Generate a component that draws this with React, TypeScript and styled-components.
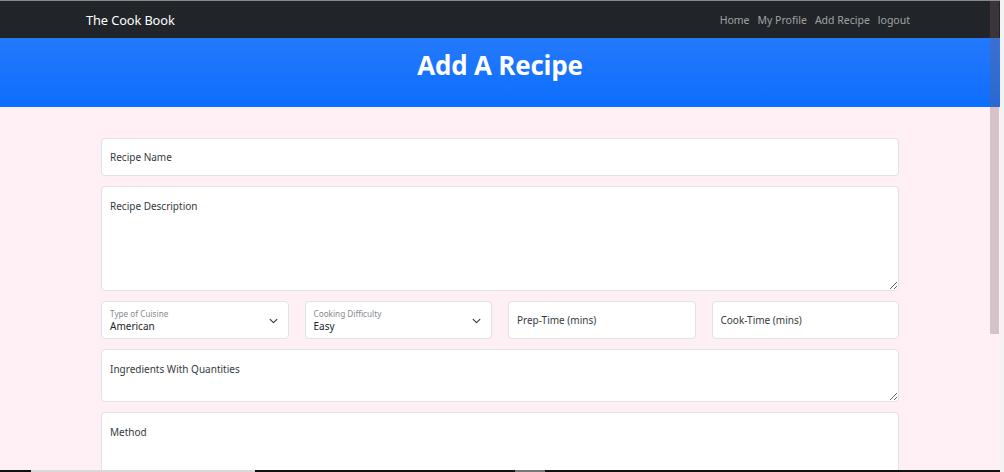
import React from "react";
import styled, { createGlobalStyle } from "styled-components";

const Global = createGlobalStyle`
  html, body { margin: 0; padding: 0; }
  body {
    background: #f3f3f3;
    font-family: "Noto Sans", "Open Sans", sans-serif;
    overflow: hidden;
  }
  * { box-sizing: border-box; }
`;

const Page = styled.div`
  position: relative;
  width: 1000px;
  height: 472px;
  background: #fff0f5;
  border-top: 1px solid #8a8a8a;
  overflow: hidden;
`;

const Navbar = styled.nav`
  height: 37px;
  background: #212529;
  display: flex;
  align-items: center;
  justify-content: space-between;
  padding: 0 90px 0 86px;
`;

const Brand = styled.a`
  color: #fff;
  font-size: 12.8px;
  text-decoration: none;
  letter-spacing: -0.1px;
`;

const NavLinks = styled.div`
  display: flex;
  gap: 8px;
`;

const NavLink = styled.a`
  color: rgba(255, 255, 255, 0.58);
  font-size: 10.5px;
  text-decoration: none;
`;

const Hero = styled.header`
  height: 69px;
  background: linear-gradient(180deg, #2479fb 0%, #0d6efd 100%);
  display: flex;
  align-items: center;
  justify-content: center;
  padding-bottom: 15px;
`;

const Title = styled.h1`
  margin: 0;
  color: #fff;
  font-family: "Open Sans", "Noto Sans", sans-serif;
  font-weight: 700;
  font-size: 26px;
  letter-spacing: -0.2px;
`;

const Form = styled.form`
  width: 798px;
  margin: 31px auto 0;
  display: flex;
  flex-direction: column;
  gap: 10px;
`;

const fieldBase = `
  width: 100%;
  background: #fff;
  border: 1px solid #dfe2e6;
  border-radius: 4px;
  font-family: "Noto Sans", "Open Sans", sans-serif;
  font-size: 10px;
  color: #212529;
  outline: none;
`;

const Input = styled.input`
  ${fieldBase}
  height: 38px;
  padding: 0 8px;
  &::placeholder { color: #343a40; opacity: 1; }
`;

const TextArea = styled.textarea<{ $h: number }>`
  ${fieldBase}
  height: ${(p) => p.$h}px;
  padding: 12px 8px;
  resize: vertical;
  line-height: 14px;
  &::placeholder { color: #343a40; opacity: 1; }
`;

const Row = styled.div`
  display: grid;
  grid-template-columns: repeat(4, 1fr);
  gap: 16px;
`;

const SelectBox = styled.div`
  ${fieldBase}
  height: 38px;
  position: relative;
  display: flex;
  flex-direction: column;
  justify-content: center;
  padding: 1px 8px 0;
`;

const SelectLabel = styled.span`
  font-size: 8.2px;
  color: #868b90;
  line-height: 12px;
`;

const SelectValue = styled.span`
  font-size: 10px;
  color: #212529;
  line-height: 13px;
`;

const Chevron = styled.svg`
  position: absolute;
  right: 10px;
  top: 16px;
`;

const Scrollbar = styled.div`
  position: absolute;
  top: 0;
  right: 1px;
  width: 9px;
  height: 333px;
  background: rgba(120, 90, 100, 0.3);
`;

const EdgeStrip = styled.div`
  position: absolute;
  left: 0;
  right: 0;
  bottom: 0;
  height: 2px;
  background: linear-gradient(90deg, #111 0 31px, #d8d8d8 31px 255px, #111 255px 515px, #777 515px 545px, #111 545px);
`;

const ChevronIcon = () => (
  <Chevron width="9" height="6" viewBox="0 0 16 10">
    <path d="M2 2l6 6 6-6" fill="none" stroke="#343a40" strokeWidth="2" strokeLinecap="round" strokeLinejoin="round" />
  </Chevron>
);

const Select = ({ label, value }: { label: string; value: string }) => (
  <SelectBox>
    <SelectLabel>{label}</SelectLabel>
    <SelectValue>{value}</SelectValue>
    <ChevronIcon />
  </SelectBox>
);

export default function App() {
  return (
    <>
      <Global />
      <Page>
        <Navbar>
          <Brand href="#">The Cook Book</Brand>
          <NavLinks>
            <NavLink href="#">Home</NavLink>
            <NavLink href="#">My Profile</NavLink>
            <NavLink href="#">Add Recipe</NavLink>
            <NavLink href="#">logout</NavLink>
          </NavLinks>
        </Navbar>
        <Hero>
          <Title>Add A Recipe</Title>
        </Hero>
        <Form>
          <Input placeholder="Recipe Name" />
          <TextArea $h={105} placeholder="Recipe Description" />
          <Row>
            <Select label="Type of Cuisine" value="American" />
            <Select label="Cooking Difficulty" value="Easy" />
            <Input placeholder="Prep-Time (mins)" />
            <Input placeholder="Cook-Time (mins)" />
          </Row>
          <TextArea $h={53} placeholder="Ingredients With Quantities" />
          <TextArea $h={104} placeholder="Method" />
        </Form>
        <Scrollbar />
        <EdgeStrip />
      </Page>
    </>
  );
}
